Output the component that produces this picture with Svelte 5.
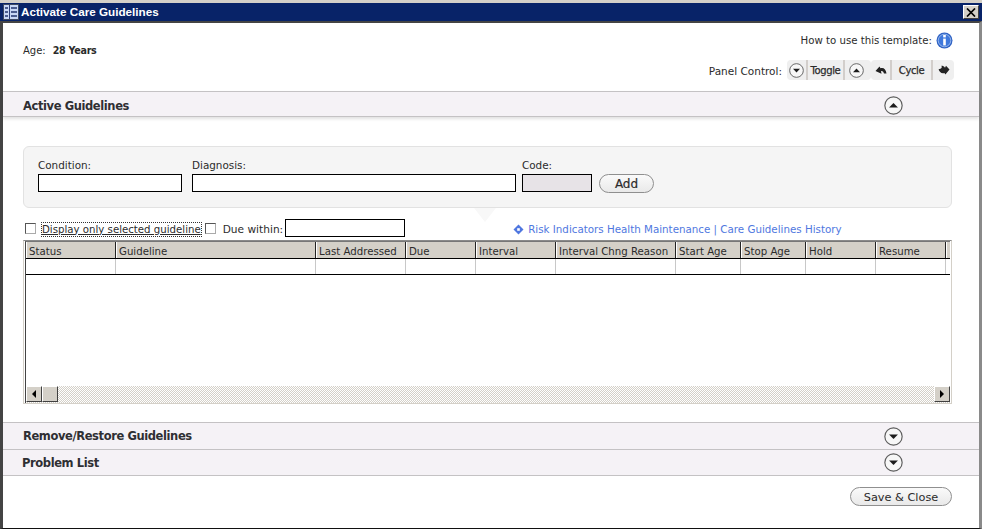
<script lang="ts">
  const columns = [
    { name: 'Status', width: 90 },
    { name: 'Guideline', width: 200 },
    { name: 'Last Addressed', width: 90 },
    { name: 'Due', width: 70 },
    { name: 'Interval', width: 80 },
    { name: 'Interval Chng Reason', width: 120 },
    { name: 'Start Age', width: 65 },
    { name: 'Stop Age', width: 65 },
    { name: 'Hold', width: 70 },
    { name: 'Resume', width: 70 }
  ];
</script>

{#snippet circleIcon(up: boolean, size: number)}
  <svg class="circle" width={size} height={size} viewBox="0 0 18 18">
    <circle cx="9" cy="9" r="8.2" fill="#f7f7f7" stroke="#5c5c5c" stroke-width="1.1" />
    {#if up}
      <path d="M4.8 11 L9 6.6 L13.2 11 Z" fill="#1c1c1c" />
    {:else}
      <path d="M4.8 7 L13.2 7 L9 11.4 Z" fill="#1c1c1c" />
    {/if}
  </svg>
{/snippet}

<div class="window">
  <div class="titlebar">
    <svg class="app-icon" width="16" height="16" viewBox="0 0 16 16">
      <rect x="0" y="0" width="16" height="16" fill="#3f4a63" />
      <rect x="1" y="1" width="14" height="14" fill="#c9d8f6" />
      <rect x="6" y="1" width="1" height="14" fill="#2c3f78" />
      <path d="M2 4h3M2 8h3M2 12h3M8 4h6M8 8h6M8 12h6" stroke="#22356f" stroke-width="1.4" />
    </svg>
    <span class="title">Activate Care Guidelines</span>
    <button class="close" aria-label="Close">
      <svg width="10" height="9" viewBox="0 0 10 9"><path d="M1 0.5 L9 8.5 M9 0.5 L1 8.5" stroke="#000" stroke-width="1.7" /></svg>
    </button>
  </div>

  <div class="content">
    <div class="top">
      <div class="age"><span>Age:</span><strong>28 Years</strong></div>
      <div class="top-right">
        <div class="howto">
          <span>How to use this template:</span>
          <svg width="17" height="17" viewBox="0 0 17 17">
            <circle cx="8.5" cy="8.5" r="8" fill="#2f62c4" />
            <circle cx="8.5" cy="8.5" r="6.3" fill="#3f78dc" stroke="#a9c6f2" stroke-width="0.8" />
            <rect x="7.2" y="3" width="2.6" height="2.4" fill="#fff" />
            <rect x="7.2" y="6.6" width="2.6" height="6.8" fill="#fff" />
          </svg>
        </div>
        <div class="panel-control">
          <span class="pc-label">Panel Control:</span>
          <div class="pc-group">
            <span class="pc-cell icon">{@render circleIcon(false, 15)}</span>
            <span class="pc-cell toggle">Toggle</span>
            <span class="pc-cell icon wide last">{@render circleIcon(true, 15)}</span>
          </div>
          <div class="pc-group">
            <span class="pc-cell undo">
              <svg width="12" height="9" viewBox="0 0 12 9"><path d="M0.5 5 L4.5 0.5 L5.5 2.2 C8.5 1.2 11 3 11.5 7.5 L9 7.5 C8.5 5.5 7.5 4.8 6 5 L6.5 7.8 Z" fill="#222" /></svg>
            </span>
            <span class="pc-cell cycle">Cycle</span>
            <span class="pc-cell redo last">
              <svg width="12" height="10" viewBox="0 0 12 10"><path d="M11.5 4.6 L8 0.8 L7 2.8 C6 1.4 5 0.8 3.4 0.8 C4.4 2.6 3.6 3.8 0.6 4.2 C1.2 7 3.4 8.8 6.4 8 L7.4 9.5 Z" fill="#222" /></svg>
            </span>
          </div>
        </div>
      </div>
    </div>

    <div class="section active">
      <h2>Active Guidelines</h2>
      {@render circleIcon(true, 19)}
    </div>

    <div class="body">
      <div class="form-panel">
        <label class="field">
          <span>Condition:</span>
          <input class="condition" type="text" />
        </label>
        <label class="field">
          <span>Diagnosis:</span>
          <input class="diagnosis" type="text" />
        </label>
        <label class="field">
          <span>Code:</span>
          <input class="code" type="text" disabled />
        </label>
        <button class="pill add">Add</button>
        <span class="notch"></span>
      </div>

      <div class="options">
        <span class="check"></span>
        <span class="check-label focused">Display only selected guideline</span>
        <span class="check second"></span>
        <span class="check-label due-label">Due within:</span>
        <input class="due" type="text" />
        <div class="links">
          <svg width="11" height="11" viewBox="0 0 11 11">
            <path d="M5.5 0.5 L10.5 5.5 L5.5 10.5 L0.5 5.5 Z" fill="#4f77e0" />
            <rect x="4.2" y="4.2" width="2.6" height="2.6" fill="#fff" />
          </svg>
          <span>Risk Indicators Health Maintenance | Care Guidelines History</span>
        </div>
      </div>

      <div class="grid">
        <div class="grid-inner">
          <div class="grid-head">
            {#each columns as col}
              <div class="hcell" style="width: {col.width}px">{col.name}</div>
            {/each}
            <div class="hcell rest"></div>
          </div>
          <div class="grid-row">
            {#each columns as col}
              <div class="cell" style="width: {col.width}px"></div>
            {/each}
          </div>
          <div class="grid-empty"></div>
          <div class="scrollbar">
            <span class="sb-btn"><span class="tri left"></span></span>
            <span class="sb-thumb"></span>
            <span class="sb-track"></span>
            <span class="sb-btn"><span class="tri right"></span></span>
          </div>
        </div>
      </div>
    </div>

    <div class="section remove">
      <h2>Remove/Restore Guidelines</h2>
      {@render circleIcon(false, 19)}
    </div>
    <div class="section problem">
      <h2>Problem List</h2>
      {@render circleIcon(false, 19)}
    </div>

    <div class="footer">
      <button class="pill save">Save &amp; Close</button>
    </div>
  </div>
</div>

<style>
  :global(body) {
    margin: 0;
    background: #fff;
  }

  .window {
    width: 982px;
    height: 529px;
    box-sizing: border-box;
    display: flex;
    flex-direction: column;
    background: #d4d0c8;
    padding: 3px 0 0;
    font-family: "DejaVu Sans", Verdana, sans-serif;
    font-size: 10px;
    color: #2b2b2b;
    overflow: hidden;
  }

  .titlebar {
    height: 18px;
    flex-shrink: 0;
    background: #082368;
    display: flex;
    align-items: center;
    padding: 0 3px;
    color: #fff;
  }

  .app-icon {
    flex-shrink: 0;
  }

  .title {
    margin-left: 2px;
    margin-bottom: 2px;
    font-family: "Liberation Sans", Arial, sans-serif;
    font-weight: 700;
    font-size: 11.7px;
    flex: 1;
  }

  .close {
    width: 16px;
    height: 14px;
    padding: 0;
    border: 1px solid;
    border-color: #fff #404040 #404040 #fff;
    background: #d4d0c8;
    display: flex;
    align-items: center;
    justify-content: center;
  }

  .content {
    flex: 1;
    min-height: 0;
    display: flex;
    flex-direction: column;
    background: #fff;
    border-top: 2px solid #444;
    border-left: 3px solid #444;
    border-right: 3px solid #8a8a8a;
    border-bottom: 1px solid #111;
  }

  .top {
    height: 68px;
    flex-shrink: 0;
    display: flex;
    justify-content: space-between;
    padding: 0 25px 0 20px;
    box-sizing: border-box;
  }

  .age {
    margin-top: 22px;
    display: flex;
    gap: 7px;
    height: 12px;
    line-height: 12px;
  }

  .age strong {
    font-size: 9.6px;
    letter-spacing: -0.3px;
  }

  .top-right {
    display: flex;
    flex-direction: column;
    align-items: flex-end;
  }

  .howto {
    margin-top: 9px;
    margin-right: 1px;
    display: flex;
    align-items: center;
    gap: 4px;
    font-size: 10.2px;
  }

  .panel-control {
    margin-top: 11px;
    display: flex;
    align-items: center;
  }

  .pc-label {
    margin-top: 2px;
    margin-right: 5px;
    font-size: 10.5px;
  }

  .pc-group {
    display: flex;
    height: 20px;
    background: #efefef;
    border-radius: 4px;
  }

  .pc-cell {
    display: flex;
    align-items: center;
    justify-content: center;
    border-right: 2px solid #d2cecb;
    font-size: 10px;
    letter-spacing: -0.4px;
    -webkit-text-stroke: 0.25px #2b2b2b;
    box-sizing: border-box;
  }

  .pc-cell.last {
    border-right: none;
  }

  .icon {
    width: 21px;
  }

  .icon.wide {
    width: 26px;
    padding-right: 4px;
  }

  .toggle {
    width: 37px;
  }

  .undo {
    width: 21px;
  }

  .cycle {
    width: 41px;
  }

  .redo {
    width: 21px;
  }

  .section {
    flex-shrink: 0;
    display: flex;
    align-items: center;
    justify-content: space-between;
    background: #f5f2f6;
    border-top: 1px solid #c4c2c4;
    border-bottom: 1px solid #c4c2c4;
    padding: 0 76px 0 20px;
    box-sizing: border-box;
  }

  .section h2 {
    margin: 0;
    font-size: 11.5px;
    font-weight: 700;
    letter-spacing: -0.4px;
    color: #2f2f33;
  }

  .active {
    height: 26px;
    padding-top: 2px;
    box-shadow: 0 2px 3px rgba(0, 0, 0, 0.12);
    position: relative;
  }

  .active h2 {
    margin-top: 1px;
  }

  .remove {
    height: 27px;
    border-bottom: none;
  }

  .problem {
    height: 27px;
  }

  .problem h2 {
    margin-left: -1px;
  }

  .body {
    height: 305px;
    flex-shrink: 0;
    box-sizing: border-box;
    padding: 29px 27px 0 20px;
  }

  .form-panel {
    position: relative;
    height: 62px;
    box-sizing: border-box;
    background: #f5f5f5;
    border: 1px solid #e2e2e2;
    border-radius: 6px;
    padding: 12px 14px 0;
    display: flex;
    gap: 10px;
  }

  .field {
    display: flex;
    flex-direction: column;
    gap: 2px;
    font-size: 10.4px;
    line-height: 13px;
  }

  input {
    box-sizing: border-box;
    height: 18px;
    padding: 0;
    border: 1px solid #000;
    border-radius: 0;
    background: #fff;
    display: block;
  }

  .condition {
    width: 144px;
  }

  .diagnosis {
    width: 324px;
  }

  .field:nth-child(3) {
    margin-left: -4px;
  }

  .code {
    width: 70px;
    background: #e7e3e7;
  }

  .pill {
    border: 1px solid #8f8f8f;
    border-radius: 10px;
    background: linear-gradient(#fafafa, #e9e9e9);
    color: #2b2b2b;
    font-family: "DejaVu Sans", Verdana, sans-serif;
    padding: 1px 0 0;
    box-sizing: border-box;
  }

  .add {
    width: 55px;
    height: 19px;
    margin-top: 15px;
    margin-left: -3px;
    font-size: 12px;
    -webkit-text-stroke: 0.2px #2b2b2b;
  }

  .notch {
    position: absolute;
    left: 450px;
    bottom: -15px;
    width: 22px;
    height: 14px;
    background: #f8f8f8;
    clip-path: polygon(0 0, 100% 0, 50% 100%);
  }

  .options {
    margin-top: 10px;
    height: 19px;
    display: flex;
    align-items: center;
    margin-left: 2px;
    position: relative;
  }

  .check {
    width: 9px;
    height: 9px;
    margin-top: 1px;
    border: 1px solid;
    border-color: #555 #aaa #aaa #555;
    background: #fff;
    flex-shrink: 0;
  }

  .check.second {
    margin-left: 4px;
  }

  .check-label {
    margin-top: 3px;
    margin-left: 6px;
    font-size: 10.2px;
    line-height: 13px;
    white-space: nowrap;
  }

  .due-label {
    margin-left: 7px;
    font-size: 10.6px;
  }

  .check-label.focused {
    outline: 1px dotted #333;
    text-decoration: underline;
    text-underline-offset: 1px;
  }

  .due {
    width: 120px;
    height: 18px;
    margin-left: 2px;
  }

  .links {
    display: flex;
    align-items: center;
    gap: 4px;
    margin-left: 108px;
    color: #4f77e0;
    font-size: 10.3px;
    white-space: nowrap;
    margin-top: 3px;
  }

  .grid {
    margin-top: 3px;
    height: 164px;
    width: 929px;
    box-sizing: border-box;
    border: 1px solid #d4d0c8;
    border-top-color: #8a8a8a;
  }

  .grid-inner {
    height: 100%;
    box-sizing: border-box;
    border-top: 1px solid #777;
    border-left: 1px solid #444;
    margin: 0 1px 1px 1px;
    display: flex;
    flex-direction: column;
    overflow: hidden;
  }

  .grid-head {
    display: flex;
    height: 16px;
    flex-shrink: 0;
    background: #d4d0c8;
    border-bottom: 1px solid #000;
  }

  .hcell {
    box-sizing: border-box;
    border-right: 1px solid #222;
    border-left: 1px solid #fff;
    padding-left: 2px;
    line-height: 20px;
    font-size: 10.2px;
    white-space: nowrap;
    overflow: hidden;
  }

  .hcell.rest {
    flex: 1;
    border-right: none;
  }

  .grid-row {
    display: flex;
    height: 15px;
    flex-shrink: 0;
    border-bottom: 1px solid #000;
  }

  .cell {
    box-sizing: border-box;
    border-right: 1px solid #c8c8c8;
  }

  .grid-empty {
    flex: 1;
  }

  .scrollbar {
    height: 17px;
    flex-shrink: 0;
    display: flex;
    background: repeating-conic-gradient(#d4d0c8 0 25%, #fff 0 50%) 0 0 / 2px 2px;
  }

  .sb-btn,
  .sb-thumb {
    width: 16px;
    height: 16px;
    background: #d4d0c8;
    border: 1px solid;
    border-color: #fff #404040 #404040 #fff;
    box-sizing: border-box;
    display: flex;
    align-items: center;
    justify-content: center;
    flex-shrink: 0;
  }

  .sb-track {
    flex: 1;
  }

  .tri {
    width: 0;
    height: 0;
    border-top: 4px solid transparent;
    border-bottom: 4px solid transparent;
  }

  .tri.left {
    border-right: 4px solid #000;
  }

  .tri.right {
    border-left: 4px solid #000;
  }

  .footer {
    flex: 1;
    display: flex;
    justify-content: flex-end;
    align-items: flex-start;
    padding: 11px 27px 0 0;
  }

  .save {
    width: 102px;
    height: 19px;
    font-size: 11.3px;
  }
</style>
